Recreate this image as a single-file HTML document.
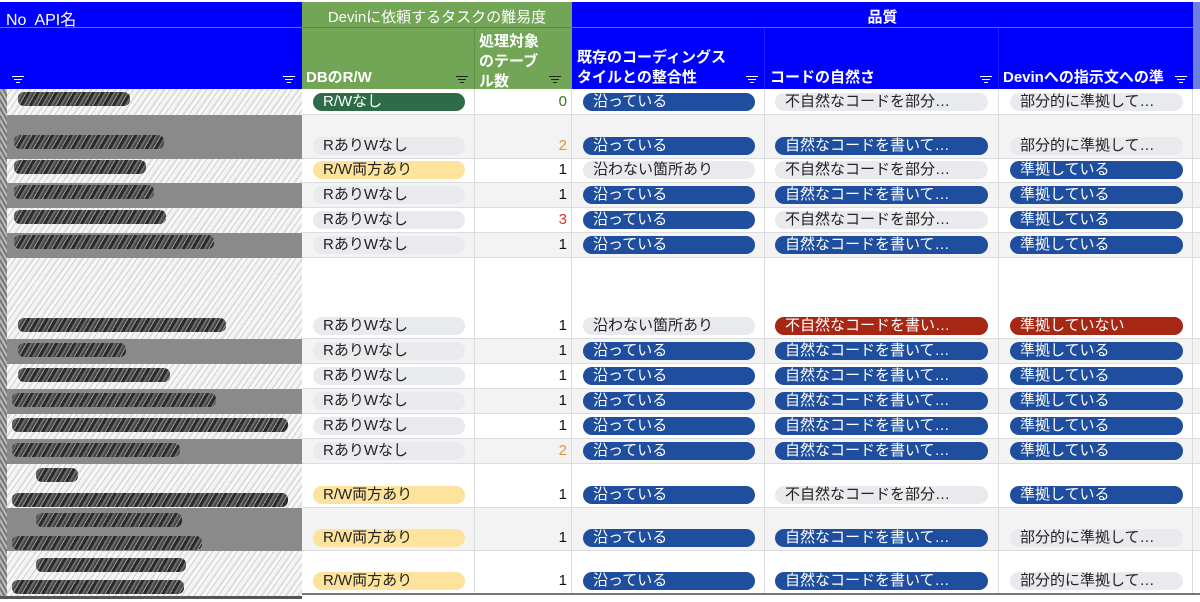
<!DOCTYPE html>
<html><head><meta charset="utf-8"><style>
*{margin:0;padding:0;box-sizing:border-box}
body{width:1200px;height:602px;overflow:hidden;background:#fff;position:relative;font-family:"Liberation Sans","Noto Sans CJK JP",sans-serif}
.a{position:absolute}
.hb{background:#0000ff;color:#fff}
.hg{background:#72a555;color:#fff}
.ht{position:absolute;font-weight:bold;font-size:15px;line-height:20px;color:#fff;white-space:nowrap}
.f{position:absolute;width:12px;height:8px}
.f i{position:absolute;left:0;height:1px;background:#fff;display:block}
.row{position:absolute;left:302px;width:898px;border-bottom:1px solid #dcdcdc}
.w{background:#fff}.g{background:#f3f3f3}
.c{position:absolute;top:0;bottom:0;border-right:1px solid #dcdcdc}
.p{position:absolute;bottom:3px;height:18px;border-radius:9px;font-size:15px;line-height:18px;padding-left:10px;white-space:nowrap;overflow:hidden;color:#222}
.bl{background:#1f4e9e;color:#fff}.gr{background:#e8eaed}.ye{background:#fde39b}.dg{background:#2e6b47;color:#fff}.rd{background:#a52714;color:#fff}
.n{position:absolute;right:4px;bottom:3px;font-size:15px;line-height:18px;color:#111}
.L{position:absolute;left:0;width:302px}
.lt{background:repeating-linear-gradient(125deg,#f4f4f4 0 4px,#dcdcdc 4px 6px,#fafafa 6px 9px,#cfcfcf 9px 10px)}
.ld{background:#8a8a8a}
.bz{position:absolute;height:14px;border-radius:6px;background:repeating-linear-gradient(120deg,#2a2a2a 0 3px,#6a6a6a 3px 5px,#444 5px 7px,#999 7px 8px)}
</style></head><body>
<div class="a hb" style="left:0;top:2px;width:302px;height:87px"></div>
<div class="a hg" style="left:302px;top:2px;width:270px;height:87px"></div>
<div class="a hb" style="left:572px;top:2px;width:621px;height:87px"></div>
<div class="a" style="left:1193px;top:2px;width:7px;height:87px;background:#6d7fe0"></div>
<div class="a" style="left:0;top:27px;width:1193px;height:1px;background:#5a8a40"></div>
<div class="a" style="left:474px;top:28px;width:1px;height:61px;background:#5f9145"></div>
<div class="a" style="left:764px;top:28px;width:1px;height:61px;background:#2020ff"></div>
<div class="a" style="left:998px;top:28px;width:1px;height:61px;background:#2020ff"></div>
<div class="a" style="left:6px;top:6px;color:#fff;font-size:16px">No&nbsp; API名</div>
<div class="a" style="left:302px;top:6px;width:270px;text-align:center;color:#fff;font-size:15px">Devinに依頼するタスクの難易度</div>
<div class="a" style="left:572px;top:6px;width:621px;text-align:center;color:#fff;font-size:15px;font-weight:bold">品質</div>
<div class="ht" style="left:306px;top:68px">DBのR/W</div>
<div class="ht" style="left:479px;top:32px">処理対象<br>のテーブ<br>ル数</div>
<div class="ht" style="left:577px;top:48px">既存のコーディングス<br>タイルとの整合性</div>
<div class="ht" style="left:770px;top:68px">コードの自然さ</div>
<div class="ht" style="left:1003px;top:68px">Devinへの指示文への準</div>
<div class="f" style="left:12px;top:76px"><i style="top:0;width:12px"></i><i style="top:3px;left:2px;width:8px"></i><i style="top:6px;left:4px;width:4px"></i></div>
<div class="f" style="left:283px;top:76px"><i style="top:0;width:12px"></i><i style="top:3px;left:2px;width:8px"></i><i style="top:6px;left:4px;width:4px"></i></div>
<div class="f" style="left:456px;top:76px"><i style="top:0;width:12px;background:#222"></i><i style="top:3px;left:2px;width:8px;background:#222"></i><i style="top:6px;left:4px;width:4px;background:#222"></i></div>
<div class="f" style="left:549px;top:76px"><i style="top:0;width:12px;background:#222"></i><i style="top:3px;left:2px;width:8px;background:#222"></i><i style="top:6px;left:4px;width:4px;background:#222"></i></div>
<div class="f" style="left:746px;top:76px"><i style="top:0;width:12px"></i><i style="top:3px;left:2px;width:8px"></i><i style="top:6px;left:4px;width:4px"></i></div>
<div class="f" style="left:980px;top:76px"><i style="top:0;width:12px"></i><i style="top:3px;left:2px;width:8px"></i><i style="top:6px;left:4px;width:4px"></i></div>
<div class="f" style="left:1175px;top:76px"><i style="top:0;width:12px"></i><i style="top:3px;left:2px;width:8px"></i><i style="top:6px;left:4px;width:4px"></i></div>

<div class="L lt" style="top:89px;height:509px"></div>
<div class="L ld" style="top:115px;height:44px"></div>
<div class="L ld" style="top:183px;height:25px"></div>
<div class="L ld" style="top:233px;height:25px"></div>
<div class="L ld" style="top:339px;height:25px"></div>
<div class="L ld" style="top:389px;height:25px"></div>
<div class="L ld" style="top:439px;height:25px"></div>
<div class="L ld" style="top:508px;height:43px"></div>
<div class="a" style="left:0;top:89px;width:7px;height:509px;background:repeating-linear-gradient(60deg,#777 0 2px,#bbb 2px 4px)"></div>
<div class="bz" style="left:18px;top:92px;width:112px"></div>
<div class="bz" style="left:14px;top:135px;width:150px"></div>
<div class="bz" style="left:14px;top:160px;width:132px"></div>
<div class="bz" style="left:14px;top:185px;width:140px"></div>
<div class="bz" style="left:14px;top:210px;width:152px"></div>
<div class="bz" style="left:14px;top:235px;width:200px"></div>
<div class="bz" style="left:18px;top:318px;width:208px"></div>
<div class="bz" style="left:18px;top:343px;width:108px"></div>
<div class="bz" style="left:18px;top:368px;width:152px"></div>
<div class="bz" style="left:12px;top:393px;width:204px"></div>
<div class="bz" style="left:12px;top:418px;width:276px"></div>
<div class="bz" style="left:12px;top:443px;width:168px"></div>
<div class="bz" style="left:36px;top:468px;width:42px"></div>
<div class="bz" style="left:12px;top:493px;width:276px"></div>
<div class="bz" style="left:36px;top:513px;width:146px"></div>
<div class="bz" style="left:12px;top:536px;width:190px"></div>
<div class="bz" style="left:36px;top:558px;width:150px"></div>
<div class="bz" style="left:12px;top:580px;width:172px"></div>

<div class="row w" style="top:89px;height:26px"><div class="c" style="left:0;width:173px"><div class="p dg" style="left:11px;width:152px">R/Wなし</div></div><div class="c" style="left:173px;width:97px"><div class="n" style="color:#38761d">0</div></div><div class="c" style="left:270px;width:193px"><div class="p bl" style="left:11px;width:172px">沿っている</div></div><div class="c" style="left:463px;width:234px"><div class="p gr" style="left:10px;width:213px">不自然なコードを部分…</div></div><div class="c" style="left:697px;width:194px"><div class="p gr" style="left:11px;width:173px">部分的に準拠して…</div></div></div>

<div class="row g" style="top:115px;height:44px"><div class="c" style="left:0;width:173px"><div class="p gr" style="left:11px;width:152px">RありWなし</div></div><div class="c" style="left:173px;width:97px"><div class="n" style="color:#e69138">2</div></div><div class="c" style="left:270px;width:193px"><div class="p bl" style="left:11px;width:172px">沿っている</div></div><div class="c" style="left:463px;width:234px"><div class="p bl" style="left:10px;width:213px">自然なコードを書いて…</div></div><div class="c" style="left:697px;width:194px"><div class="p gr" style="left:11px;width:173px">部分的に準拠して…</div></div></div>

<div class="row w" style="top:159px;height:24px"><div class="c" style="left:0;width:173px"><div class="p ye" style="left:11px;width:152px">R/W両方あり</div></div><div class="c" style="left:173px;width:97px"><div class="n">1</div></div><div class="c" style="left:270px;width:193px"><div class="p gr" style="left:11px;width:172px">沿わない箇所あり</div></div><div class="c" style="left:463px;width:234px"><div class="p gr" style="left:10px;width:213px">不自然なコードを部分…</div></div><div class="c" style="left:697px;width:194px"><div class="p bl" style="left:11px;width:173px">準拠している</div></div></div>

<div class="row g" style="top:183px;height:25px"><div class="c" style="left:0;width:173px"><div class="p gr" style="left:11px;width:152px">RありWなし</div></div><div class="c" style="left:173px;width:97px"><div class="n">1</div></div><div class="c" style="left:270px;width:193px"><div class="p bl" style="left:11px;width:172px">沿っている</div></div><div class="c" style="left:463px;width:234px"><div class="p bl" style="left:10px;width:213px">自然なコードを書いて…</div></div><div class="c" style="left:697px;width:194px"><div class="p bl" style="left:11px;width:173px">準拠している</div></div></div>

<div class="row w" style="top:208px;height:25px"><div class="c" style="left:0;width:173px"><div class="p gr" style="left:11px;width:152px">RありWなし</div></div><div class="c" style="left:173px;width:97px"><div class="n" style="color:#e0301e">3</div></div><div class="c" style="left:270px;width:193px"><div class="p bl" style="left:11px;width:172px">沿っている</div></div><div class="c" style="left:463px;width:234px"><div class="p gr" style="left:10px;width:213px">不自然なコードを部分…</div></div><div class="c" style="left:697px;width:194px"><div class="p bl" style="left:11px;width:173px">準拠している</div></div></div>

<div class="row g" style="top:233px;height:25px"><div class="c" style="left:0;width:173px"><div class="p gr" style="left:11px;width:152px">RありWなし</div></div><div class="c" style="left:173px;width:97px"><div class="n">1</div></div><div class="c" style="left:270px;width:193px"><div class="p bl" style="left:11px;width:172px">沿っている</div></div><div class="c" style="left:463px;width:234px"><div class="p bl" style="left:10px;width:213px">自然なコードを書いて…</div></div><div class="c" style="left:697px;width:194px"><div class="p bl" style="left:11px;width:173px">準拠している</div></div></div>

<div class="row w" style="top:258px;height:81px"><div class="c" style="left:0;width:173px"><div class="p gr" style="left:11px;width:152px">RありWなし</div></div><div class="c" style="left:173px;width:97px"><div class="n">1</div></div><div class="c" style="left:270px;width:193px"><div class="p gr" style="left:11px;width:172px">沿わない箇所あり</div></div><div class="c" style="left:463px;width:234px"><div class="p rd" style="left:10px;width:213px">不自然なコードを書い…</div></div><div class="c" style="left:697px;width:194px"><div class="p rd" style="left:11px;width:173px">準拠していない</div></div></div>

<div class="row g" style="top:339px;height:25px"><div class="c" style="left:0;width:173px"><div class="p gr" style="left:11px;width:152px">RありWなし</div></div><div class="c" style="left:173px;width:97px"><div class="n">1</div></div><div class="c" style="left:270px;width:193px"><div class="p bl" style="left:11px;width:172px">沿っている</div></div><div class="c" style="left:463px;width:234px"><div class="p bl" style="left:10px;width:213px">自然なコードを書いて…</div></div><div class="c" style="left:697px;width:194px"><div class="p bl" style="left:11px;width:173px">準拠している</div></div></div>

<div class="row w" style="top:364px;height:25px"><div class="c" style="left:0;width:173px"><div class="p gr" style="left:11px;width:152px">RありWなし</div></div><div class="c" style="left:173px;width:97px"><div class="n">1</div></div><div class="c" style="left:270px;width:193px"><div class="p bl" style="left:11px;width:172px">沿っている</div></div><div class="c" style="left:463px;width:234px"><div class="p bl" style="left:10px;width:213px">自然なコードを書いて…</div></div><div class="c" style="left:697px;width:194px"><div class="p bl" style="left:11px;width:173px">準拠している</div></div></div>

<div class="row g" style="top:389px;height:25px"><div class="c" style="left:0;width:173px"><div class="p gr" style="left:11px;width:152px">RありWなし</div></div><div class="c" style="left:173px;width:97px"><div class="n">1</div></div><div class="c" style="left:270px;width:193px"><div class="p bl" style="left:11px;width:172px">沿っている</div></div><div class="c" style="left:463px;width:234px"><div class="p bl" style="left:10px;width:213px">自然なコードを書いて…</div></div><div class="c" style="left:697px;width:194px"><div class="p bl" style="left:11px;width:173px">準拠している</div></div></div>

<div class="row w" style="top:414px;height:25px"><div class="c" style="left:0;width:173px"><div class="p gr" style="left:11px;width:152px">RありWなし</div></div><div class="c" style="left:173px;width:97px"><div class="n">1</div></div><div class="c" style="left:270px;width:193px"><div class="p bl" style="left:11px;width:172px">沿っている</div></div><div class="c" style="left:463px;width:234px"><div class="p bl" style="left:10px;width:213px">自然なコードを書いて…</div></div><div class="c" style="left:697px;width:194px"><div class="p bl" style="left:11px;width:173px">準拠している</div></div></div>

<div class="row g" style="top:439px;height:25px"><div class="c" style="left:0;width:173px"><div class="p gr" style="left:11px;width:152px">RありWなし</div></div><div class="c" style="left:173px;width:97px"><div class="n" style="color:#e69138">2</div></div><div class="c" style="left:270px;width:193px"><div class="p bl" style="left:11px;width:172px">沿っている</div></div><div class="c" style="left:463px;width:234px"><div class="p bl" style="left:10px;width:213px">自然なコードを書いて…</div></div><div class="c" style="left:697px;width:194px"><div class="p bl" style="left:11px;width:173px">準拠している</div></div></div>

<div class="row w" style="top:464px;height:44px"><div class="c" style="left:0;width:173px"><div class="p ye" style="left:11px;width:152px">R/W両方あり</div></div><div class="c" style="left:173px;width:97px"><div class="n">1</div></div><div class="c" style="left:270px;width:193px"><div class="p bl" style="left:11px;width:172px">沿っている</div></div><div class="c" style="left:463px;width:234px"><div class="p gr" style="left:10px;width:213px">不自然なコードを部分…</div></div><div class="c" style="left:697px;width:194px"><div class="p bl" style="left:11px;width:173px">準拠している</div></div></div>

<div class="row g" style="top:508px;height:43px"><div class="c" style="left:0;width:173px"><div class="p ye" style="left:11px;width:152px">R/W両方あり</div></div><div class="c" style="left:173px;width:97px"><div class="n">1</div></div><div class="c" style="left:270px;width:193px"><div class="p bl" style="left:11px;width:172px">沿っている</div></div><div class="c" style="left:463px;width:234px"><div class="p bl" style="left:10px;width:213px">自然なコードを書いて…</div></div><div class="c" style="left:697px;width:194px"><div class="p gr" style="left:11px;width:173px">部分的に準拠して…</div></div></div>

<div class="row w" style="top:551px;height:44px;border-bottom:2px solid #777"><div class="c" style="left:0;width:173px"><div class="p ye" style="left:11px;width:152px">R/W両方あり</div></div><div class="c" style="left:173px;width:97px"><div class="n">1</div></div><div class="c" style="left:270px;width:193px"><div class="p bl" style="left:11px;width:172px">沿っている</div></div><div class="c" style="left:463px;width:234px"><div class="p bl" style="left:10px;width:213px">自然なコードを書いて…</div></div><div class="c" style="left:697px;width:194px"><div class="p gr" style="left:11px;width:173px">部分的に準拠して…</div></div></div>
<div class="a" style="left:0;top:596px;width:302px;height:3px;background:#555"></div>
</body></html>
